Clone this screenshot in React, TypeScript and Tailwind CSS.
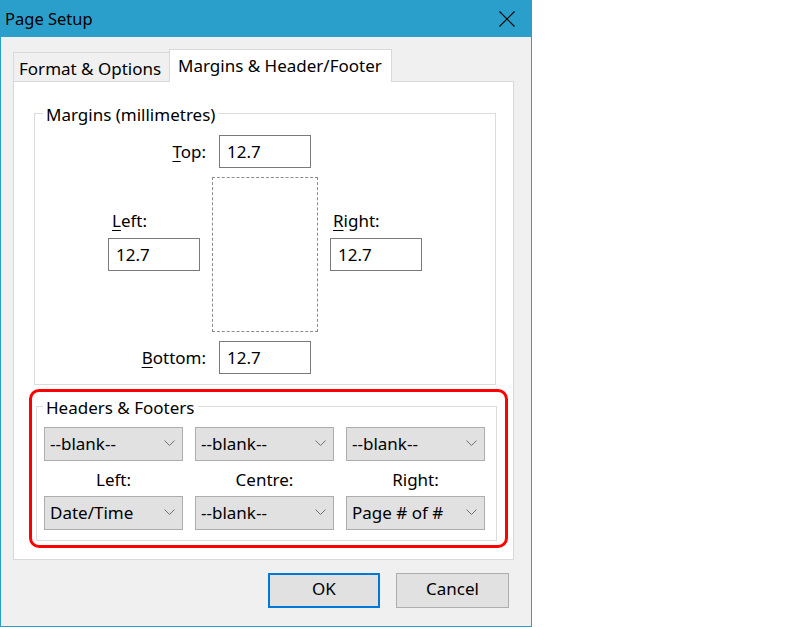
import React from "react";

const font = "font-['Noto_Sans',sans-serif] text-[17px] leading-[22px] text-black";

function NumInput({ value, className = "" }: { value: string; className?: string }) {
  return (
    <div
      className={`w-[92px] h-[33px] border border-[#7a7a7a] bg-white flex items-center pl-[7px] ${className}`}
    >
      {value}
    </div>
  );
}

function Label({ hot, rest }: { hot: string; rest: string }) {
  return (
    <span>
      <span className="underline underline-offset-[3px] decoration-1">{hot}</span>
      {rest}
    </span>
  );
}

function Combo({ value }: { value: string }) {
  return (
    <div className="h-[34px] border border-[#adadad] bg-[#e1e1e1] flex items-center justify-between pl-[5px] pr-[7px]">
      <span>{value}</span>
      <svg width="11" height="6" viewBox="0 0 11 6" className="text-[#6f6f6f] -mt-[3px]">
        <polyline points="0.5,0.5 5.5,5.5 10.5,0.5" fill="none" stroke="currentColor" strokeWidth="1" />
      </svg>
    </div>
  );
}

export default function App() {
  return (
    <div className={`w-[800px] h-[627px] bg-white ${font}`}>
      <div className="w-[532px] h-[627px] bg-[#2b9fcc] px-px pb-px flex flex-col">
        {/* title bar */}
        <div className="h-[37px] flex items-center justify-between pl-[4px] pr-[16px] text-[16.5px]">
          <span className="mt-[1px]">Page Setup</span>
          <svg width="16" height="16" viewBox="0 0 16 16">
            <path d="M0.5 0.5 L15.5 15.5 M15.5 0.5 L0.5 15.5" stroke="#000" strokeWidth="1.1" fill="none" />
          </svg>
        </div>

        <div className="flex-1 bg-[#f0f0f0] pl-[12px] pt-[12px]">
          {/* tabs */}
          <div className="flex items-end h-[32px]">
            <div className="w-[156px] h-[29px] border border-b-0 border-r-0 border-[#d9d9d9] bg-[#f0f0f0] pl-[5px] flex items-end pb-[1px] whitespace-nowrap">
              Format &amp; Options
            </div>
            <div className="relative z-10 -mb-px h-[33px] w-[223px] border border-b-0 border-[#d9d9d9] bg-white pl-[8px] flex items-end pb-[5px] whitespace-nowrap">
              Margins &amp; Header/Footer
            </div>
          </div>

          {/* panel */}
          <div className="w-[501px] h-[479px] border border-[#d9d9d9] bg-white pl-[15px] pt-[31px]">
            {/* margins group */}
            <div className="relative ml-[5px] w-[462px] h-[272px] border border-[#dcdcdc] pt-[21px]">
              <span className="absolute left-[8px] -top-[10px] bg-white px-[3px]">Margins (millimetres)</span>

              <div className="flex items-center h-[33px]">
                <div className="w-[171px] text-right">
                  <Label hot="T" rest="op:" />
                </div>
                <NumInput value="12.7" className="ml-[13px]" />
              </div>

              <div className="flex mt-[9px]">
                <div className="w-[177px] pl-[73px] pt-[33px] flex flex-col">
                  <span className="pl-[4px]">
                    <Label hot="L" rest="eft:" />
                  </span>
                  <NumInput value="12.7" className="mt-[6px] h-[32px]" />
                </div>
                <div className="w-[106px] h-[155px] border border-dashed border-[#8c8c8c]" />
                <div className="pl-[12px] pt-[33px] flex flex-col">
                  <span className="pl-[3px]">
                    <Label hot="R" rest="ight:" />
                  </span>
                  <NumInput value="12.7" className="mt-[6px] h-[32px]" />
                </div>
              </div>

              <div className="flex items-center h-[33px] mt-[9px]">
                <div className="w-[171px] text-right">
                  <Label hot="B" rest="ottom:" />
                </div>
                <NumInput value="12.7" className="ml-[13px]" />
              </div>
            </div>

            {/* highlighted headers & footers */}
            <div className="mt-[4px] w-[479px] h-[159px] border-[3px] border-[#ff0000] rounded-[10px] pl-[4px] pt-[14px]">
              <div className="relative w-[461px] h-[135px] border border-[#dcdcdc] pl-[7px] pt-[20px]">
                <span className="absolute left-[6px] -top-[10px] bg-white px-[3px]">Headers &amp; Footers</span>
                <div className="grid grid-cols-[139px_139px_139px] gap-x-[12px]">
                  <Combo value="--blank--" />
                  <Combo value="--blank--" />
                  <Combo value="--blank--" />
                  <div className="h-[35px] flex items-center justify-center pt-[2px]">Left:</div>
                  <div className="h-[35px] flex items-center justify-center pt-[2px]">Centre:</div>
                  <div className="h-[35px] flex items-center justify-center pt-[2px]">Right:</div>
                  <Combo value="Date/Time" />
                  <Combo value="--blank--" />
                  <Combo value="Page # of #" />
                </div>
              </div>
            </div>
          </div>

          {/* buttons */}
          <div className="flex justify-end gap-[16px] pr-[22px] pt-[13px]">
            <button className="w-[112px] h-[35px] border-2 border-[#0078d7] bg-[#e1e1e1] leading-[22px] pb-[3px]">OK</button>
            <button className="w-[113px] h-[35px] border border-[#adadad] bg-[#e1e1e1] leading-[22px] pb-[3px]">Cancel</button>
          </div>
        </div>
      </div>
    </div>
  );
}
